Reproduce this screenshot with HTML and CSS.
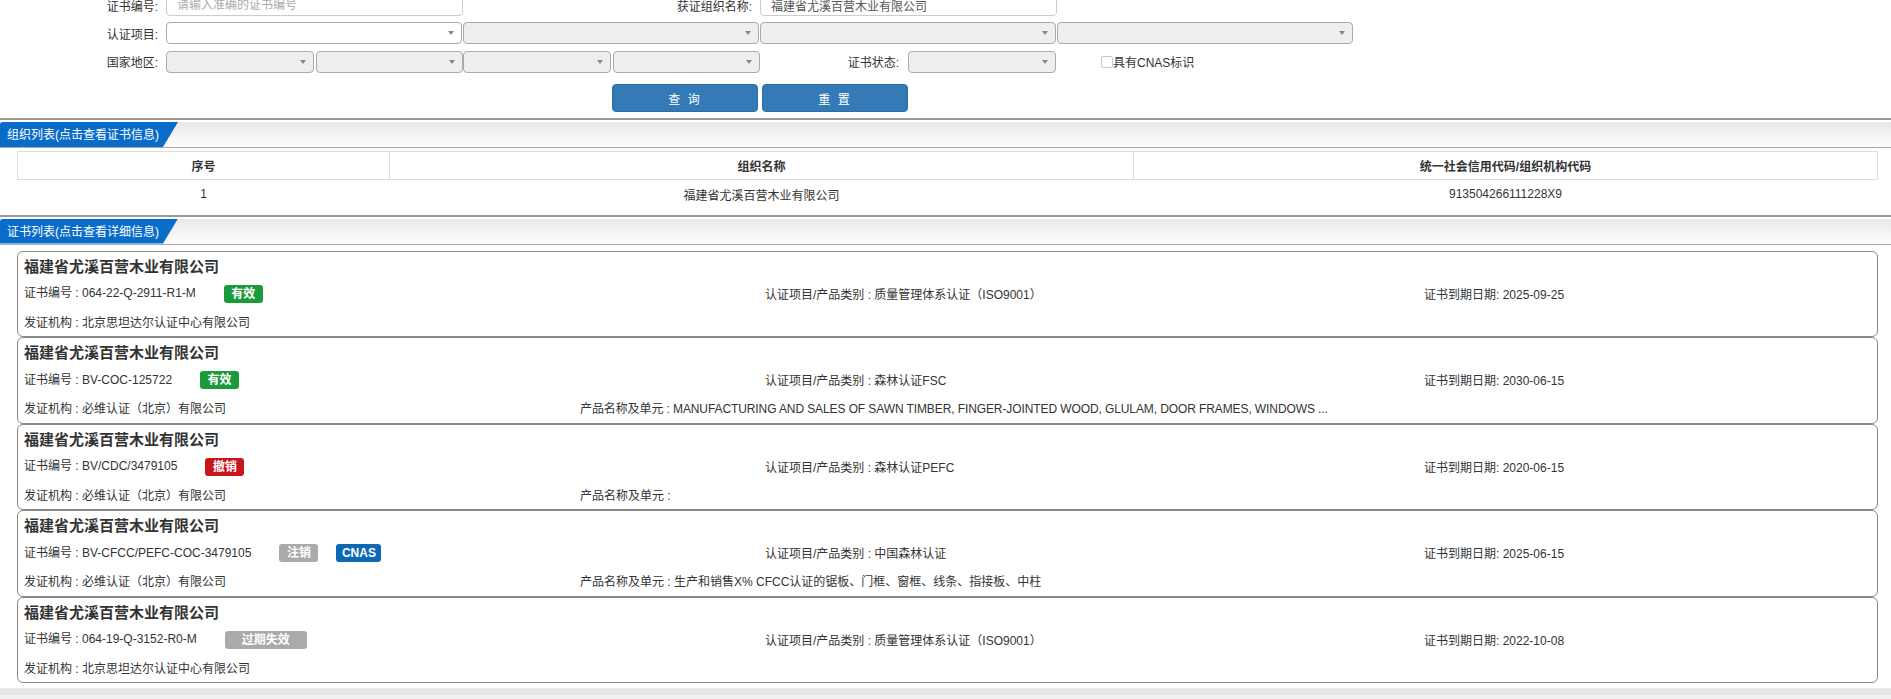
FILE: index.html
```html
<!DOCTYPE html>
<html lang="zh-CN">
	<head>
		<meta charset="UTF-8">
		<meta name="viewport" content="width=device-width, initial-scale=1.0">
		<title>证书查询</title>
		<link rel="stylesheet" href="styles.css">
	</head>
	<body>
		<div class="page">
			<form class="search">
				<label class="lbl">证书编号:</label>
				<div class="cell"><input class="txt" type="text" placeholder="请输入准确的证书编号"></div>
				<label class="lbl">获证组织名称:</label>
				<div class="cell"><input class="txt filled" type="text" value="福建省尤溪百营木业有限公司"></div>
				<div class="cell"></div>

				<label class="lbl">认证项目:</label>
				<div class="cell"><div class="sel"><span class="caret"></span></div></div>
				<div class="cell"><div class="sel off"><span class="caret"></span></div></div>
				<div class="cell"><div class="sel off"><span class="caret"></span></div></div>
				<div class="cell"><div class="sel off"><span class="caret"></span></div></div>

				<label class="lbl">国家地区:</label>
				<div class="cell halves">
					<div class="sel off"><span class="caret"></span></div>
					<div class="sel off"><span class="caret"></span></div>
				</div>
				<div class="cell halves">
					<div class="sel off"><span class="caret"></span></div>
					<div class="sel off"><span class="caret"></span></div>
				</div>
				<div class="cell status">
					<label class="lbl">证书状态:</label>
					<div class="sel off"><span class="caret"></span></div>
				</div>
				<div class="cell cnas">
					<span class="check"></span>具有CNAS标识
				</div>

				<div class="btns">
					<button type="button" class="btn">查&nbsp;询</button>
					<button type="button" class="btn">重&nbsp;置</button>
				</div>
			</form>

			<div class="section">
				<div class="sec-head"><span class="sec-tab">组织列表(点击查看证书信息)</span></div>
				<div class="sec-body org-body">
					<table class="org-table">
						<thead>
							<tr>
								<th class="c-no">序号</th>
								<th class="c-name">组织名称</th>
								<th class="c-code">统一社会信用代码/组织机构代码</th>
							</tr>
						</thead>
						<tbody>
							<tr>
								<td>1</td>
								<td>福建省尤溪百营木业有限公司</td>
								<td>913504266111228X9</td>
							</tr>
						</tbody>
					</table>
				</div>
			</div>

			<div class="section">
				<div class="sec-head"><span class="sec-tab">证书列表(点击查看详细信息)</span></div>
				<div class="sec-body cert-body">

					<div class="cert">
						<div class="cert-title">福建省尤溪百营木业有限公司</div>
						<div class="cert-row top">
							<div>证书编号 : 064-22-Q-2911-R1-M<span class="tag green">有效</span></div>
							<div>认证项目/产品类别 : 质量管理体系认证（ISO9001）</div>
							<div>证书到期日期: 2025-09-25</div>
						</div>
						<div class="cert-row bottom">
							<div>发证机构 : 北京思坦达尔认证中心有限公司</div>
							<div></div>
						</div>
					</div>

					<div class="cert">
						<div class="cert-title">福建省尤溪百营木业有限公司</div>
						<div class="cert-row top">
							<div>证书编号 : BV-COC-125722<span class="tag green">有效</span></div>
							<div>认证项目/产品类别 : 森林认证FSC</div>
							<div>证书到期日期: 2030-06-15</div>
						</div>
						<div class="cert-row bottom">
							<div>发证机构 : 必维认证（北京）有限公司</div>
							<div class="prod">产品名称及单元 : MANUFACTURING AND SALES OF SAWN TIMBER, FINGER-JOINTED WOOD, GLULAM, DOOR FRAMES, WINDOWS ...</div>
						</div>
					</div>

					<div class="cert">
						<div class="cert-title">福建省尤溪百营木业有限公司</div>
						<div class="cert-row top">
							<div>证书编号 : BV/CDC/3479105<span class="tag red">撤销</span></div>
							<div>认证项目/产品类别 : 森林认证PEFC</div>
							<div>证书到期日期: 2020-06-15</div>
						</div>
						<div class="cert-row bottom">
							<div>发证机构 : 必维认证（北京）有限公司</div>
							<div>产品名称及单元 : </div>
						</div>
					</div>

					<div class="cert">
						<div class="cert-title">福建省尤溪百营木业有限公司</div>
						<div class="cert-row top">
							<div>证书编号 : BV-CFCC/PEFC-COC-3479105<span class="tag grey">注销</span><span class="tag blue">CNAS</span></div>
							<div>认证项目/产品类别 : 中国森林认证</div>
							<div>证书到期日期: 2025-06-15</div>
						</div>
						<div class="cert-row bottom">
							<div>发证机构 : 必维认证（北京）有限公司</div>
							<div>产品名称及单元 : 生产和销售X% CFCC认证的锯板、门框、窗框、线条、指接板、中柱</div>
						</div>
					</div>

					<div class="cert">
						<div class="cert-title">福建省尤溪百营木业有限公司</div>
						<div class="cert-row top">
							<div>证书编号 : 064-19-Q-3152-R0-M<span class="tag grey wide">过期失效</span></div>
							<div>认证项目/产品类别 : 质量管理体系认证（ISO9001）</div>
							<div>证书到期日期: 2022-10-08</div>
						</div>
						<div class="cert-row bottom">
							<div>发证机构 : 北京思坦达尔认证中心有限公司</div>
							<div></div>
						</div>
					</div>

				</div>
			</div>
			<div class="foot-band"></div>
		</div>
	</body>
</html>
```

FILE: styles.css
```css
* {
	box-sizing: border-box;
	margin: 0;
	padding: 0;
}

body {
	font-family: "Liberation Sans", "Noto Sans CJK SC", sans-serif;
	font-size: 12px;
	color: #333;
	background: #f1f1f1;
}

.page {
	background: #fff;
}

/* search form */
.search {
	display: grid;
	grid-template-columns: 166px repeat(4, 297px);
	grid-template-rows: 28px 28px 29px;
	align-items: center;
	margin-top: -9px;
	padding-bottom: 6px;
}

.lbl {
	text-align: right;
	padding-right: 8px;
	white-space: nowrap;
	color: #333;
}

.cell {
	display: flex;
	align-items: center;
	height: 100%;
}

.txt {
	width: 297px;
	height: 22px;
	border: 1px solid #ccc;
	border-radius: 4px;
	padding: 0 10px;
	font-family: inherit;
	font-size: 12px;
	color: #555;
	outline: none;
}

.txt::placeholder {
	color: #aaa;
}

.sel {
	position: relative;
	width: 100%;
	height: 22px;
	margin-right: 1px;
	border: 1px solid #aaa;
	border-radius: 4px;
	background: #fff;
}

.sel.off {
	background: #eee;
}

.caret {
	position: absolute;
	right: 7px;
	top: 8px;
	border-left: 3px solid transparent;
	border-right: 3px solid transparent;
	border-top: 4px solid #888;
}

.halves {
	gap: 2px;
}

.halves .sel {
	margin-right: 0;
}

.status .lbl {
	flex: 1;
	padding-right: 9px;
}

.status .sel {
	width: 148px;
	flex: none;
}

.cnas {
	padding-left: 44px;
}

.check {
	display: inline-block;
	width: 12px;
	height: 12px;
	border: 1px solid #c8c8c8;
	border-radius: 2px;
	background: #fff;
}

.btns {
	grid-column: 3 / 5;
	display: flex;
	justify-content: center;
	gap: 4px;
	margin-top: 8px;
}

.btn {
	width: 146px;
	height: 28px;
	background: #337ab7;
	border: 1px solid #2e6da4;
	border-radius: 4px;
	color: #fff;
	font-family: inherit;
	font-size: 12px;
	letter-spacing: 2px;
	cursor: pointer;
}

/* sections */
.section {
	border-top: 2px solid #999;
	padding-top: 2px;
}

.sec-head {
	height: 26px;
	background: linear-gradient(#e8e8e8, #fdfdfd);
	border-bottom: 1px solid #aaa;
}

.sec-tab {
	display: block;
	width: 178px;
	height: 100%;
	padding-left: 7px;
	line-height: 26px;
	color: #fff;
	background: #0a6cc9;
	border-top-left-radius: 3px;
	clip-path: polygon(0 0, 100% 0, calc(100% - 15px) 100%, 0 100%);
	white-space: nowrap;
}

.org-body {
	padding: 3px 13px 6px 17px;
}

.org-table {
	width: 100%;
	border-collapse: collapse;
}

.org-table th {
	height: 28px;
	border: 1px solid #ddd;
	font-weight: bold;
}

.org-table td {
	height: 29px;
	text-align: center;
}

.c-no {
	width: 20%;
}

.c-name,
.c-code {
	width: 40%;
}

/* certificate cards */
.cert-body {
	padding: 6px 13px 3px 17px;
}

.cert {
	border: 1px solid #888;
	border-radius: 6px;
	padding: 2px 6px 1px;
}

.cert-title {
	height: 25px;
	line-height: 25px;
	font-size: 15px;
	font-weight: bold;
	color: #333;
}

.cert-row {
	display: grid;
	align-items: center;
	white-space: nowrap;
}

.cert-row.top {
	grid-template-columns: 741px 659px 1fr;
	height: 29px;
}

.cert-row.bottom {
	grid-template-columns: 556px 1fr;
	height: 27.5px;
}

.prod {
	letter-spacing: -0.1px;
}

.tag {
	display: inline-block;
	height: 18px;
	line-height: 18px;
	padding: 0 7.5px;
	margin-left: 28px;
	border-radius: 3px;
	color: #fff;
	font-weight: bold;
	vertical-align: middle;
}

.tag + .tag {
	margin-left: 18px;
}

.green {
	background: #199b3c;
}

.red {
	background: #c8161e;
}

.grey {
	background: #aaa;
}

.blue {
	background: #0d69b6;
	padding: 0 5.5px;
}

.tag.wide {
	padding: 0 17px;
}

.foot-band {
	height: 11px;
	margin-top: 2px;
	background: linear-gradient(#e4e7ea 0, #e4e7ea 7px, #f1f1f1 7px);
}
```
